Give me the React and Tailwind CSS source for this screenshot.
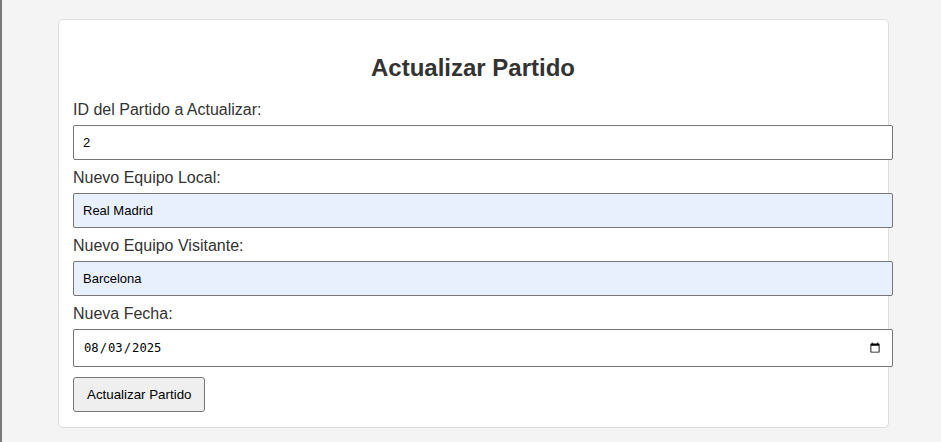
import React from 'react';

const Field = ({ label, children }) => (
  <div>
    <label className="block text-[16px] leading-[18px] text-[#333] mb-[6px]">{label}</label>
    {children}
  </div>
);

const inputCls =
  'box-content block w-full h-[17px] px-[9px] py-[8px] border border-[#767676] rounded-[2px] text-[13px] text-black outline-none mb-[9px]';

export default function App() {
  return (
    <div className="min-h-[442px] bg-[#f4f4f4] border-l-2 border-[#7a7a7a] pt-[19px] pb-[14px] font-['Liberation_Sans',Arial,sans-serif]">
      <div className="ml-[56px] w-[831px] bg-white border border-[#dddddd] rounded-[5px] pl-[14px] pr-[15px] pt-[34px] pb-[15px]">
        <h2 className="text-center text-[24px] leading-[28px] font-bold text-[#333] mb-[19px]">Actualizar Partido</h2>

        <Field label="ID del Partido a Actualizar:">
          <input type="number" defaultValue="2" className={`${inputCls} bg-white`} />
        </Field>
        <Field label="Nuevo Equipo Local:">
          <input type="text" defaultValue="Real Madrid" className={`${inputCls} bg-[#e8f0fe]`} />
        </Field>
        <Field label="Nuevo Equipo Visitante:">
          <input type="text" defaultValue="Barcelona" className={`${inputCls} bg-[#e8f0fe]`} />
        </Field>
        <Field label="Nueva Fecha:">
          <input
            type="date"
            defaultValue="2025-08-03"
            className="box-content block w-full h-[20px] px-[9px] py-[8px] border border-[#767676] rounded-[2px] text-[12.2px] text-black bg-white outline-none mb-[10px] font-['DejaVu_Sans_Mono',monospace]"
          />
        </Field>

        <button className="h-[35px] px-[13px] bg-[#efefef] border border-[#767676] rounded-[3px] text-[13.33px] text-black">
          Actualizar Partido
        </button>
      </div>
    </div>
  );
}
